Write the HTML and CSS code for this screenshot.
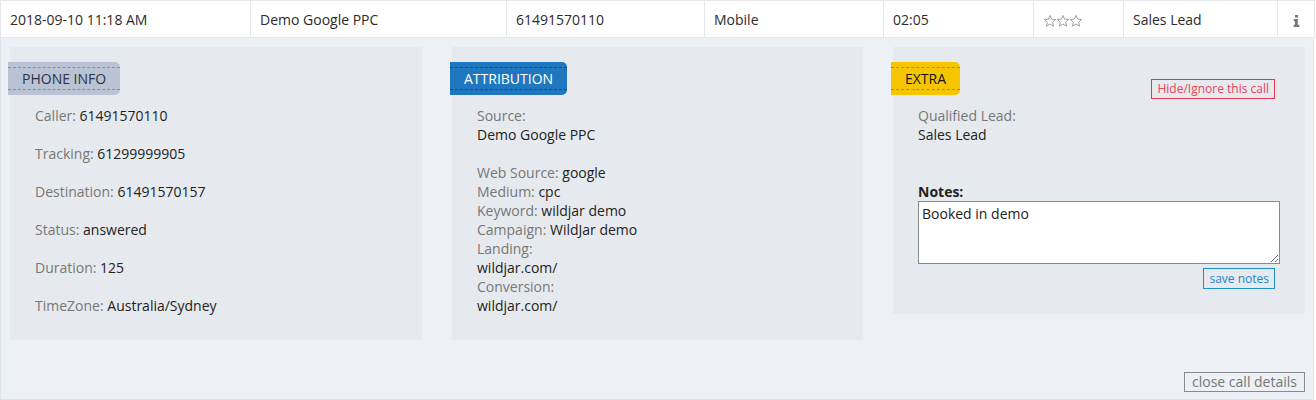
FILE: index.html
```html
<!DOCTYPE html>
<html>
<head>
<meta charset="utf-8">
<link rel="stylesheet" href="styles.css">
</head>
<body>
<div class="wrap">
  <table class="calls">
    <tr>
      <td class="c1">2018-09-10 11:18 AM</td>
      <td class="c2">Demo Google PPC</td>
      <td class="c3">61491570110</td>
      <td class="c4">Mobile</td>
      <td class="c5">02:05</td>
      <td class="c6">
        <span class="stars">
          <svg viewBox="0 0 24 24" width="14" height="14"><path d="M12 2.5l2.8 6.4 6.9.6-5.2 4.6 1.6 6.8L12 17.3l-6.1 3.6 1.6-6.8-5.2-4.6 6.9-.6z" fill="none" stroke="#9a9a9a" stroke-width="1.6" stroke-linejoin="round"/></svg><svg viewBox="0 0 24 24" width="14" height="14"><path d="M12 2.5l2.8 6.4 6.9.6-5.2 4.6 1.6 6.8L12 17.3l-6.1 3.6 1.6-6.8-5.2-4.6 6.9-.6z" fill="none" stroke="#9a9a9a" stroke-width="1.6" stroke-linejoin="round"/></svg><svg viewBox="0 0 24 24" width="14" height="14"><path d="M12 2.5l2.8 6.4 6.9.6-5.2 4.6 1.6 6.8L12 17.3l-6.1 3.6 1.6-6.8-5.2-4.6 6.9-.6z" fill="none" stroke="#9a9a9a" stroke-width="1.6" stroke-linejoin="round"/></svg>
        </span>
      </td>
      <td class="c7">Sales Lead</td>
      <td class="c8">
        <svg class="info" viewBox="0 0 7 12" width="7" height="12"><path d="M2 0h3v2.6H2z M0.8 4h4v5.8H6.3V12H0.7V9.8H2V6.2H0.8z" fill="#777"/></svg>
      </td>
    </tr>
  </table>

  <div class="details">
    <div class="panels">
      <section class="panel">
        <div class="tag-row"><div class="tag tag-phone"><span>PHONE INFO</span></div></div>
        <ul class="info-list">
          <li><span class="lbl">Caller:</span> 61491570110</li>
          <li><span class="lbl">Tracking:</span> 61299999905</li>
          <li><span class="lbl">Destination:</span> 61491570157</li>
          <li><span class="lbl">Status:</span> answered</li>
          <li><span class="lbl">Duration:</span> 125</li>
          <li><span class="lbl">TimeZone:</span> Australia/Sydney</li>
        </ul>
      </section>

      <section class="panel">
        <div class="tag-row"><div class="tag tag-attr"><span>ATTRIBUTION</span></div></div>
        <div class="lines">
          <div class="lbl">Source:</div>
          <div>Demo Google PPC</div>
          <div class="blank"></div>
          <div><span class="lbl">Web Source:</span> google</div>
          <div><span class="lbl">Medium:</span> cpc</div>
          <div><span class="lbl">Keyword:</span> wildjar demo</div>
          <div><span class="lbl">Campaign:</span> WildJar demo</div>
          <div class="lbl">Landing:</div>
          <div>wildjar.com/</div>
          <div class="lbl">Conversion:</div>
          <div>wildjar.com/</div>
        </div>
      </section>

      <section class="panel">
        <div class="tag-row">
          <div class="tag tag-extra"><span>EXTRA</span></div>
          <button class="btn btn-hide">Hide/Ignore this call</button>
        </div>
        <div class="lines">
          <div class="lbl">Qualified Lead:</div>
          <div>Sales Lead</div>
          <div class="blank"></div>
          <div class="blank"></div>
          <div class="notes-lbl">Notes:</div>
        </div>
        <textarea class="notes">Booked in demo</textarea>
        <div class="save-row"><button class="btn btn-save">save notes</button></div>
      </section>
    </div>
    <div class="close-row"><button class="btn btn-close">close call details</button></div>
  </div>
</div>
</body>
</html>
```

FILE: styles.css
```css
* { box-sizing: border-box; }
html, body { margin: 0; padding: 0; background: #ffffff; }
body {
  font-family: "Open Sans", "Liberation Sans", sans-serif;
  font-size: 14px;
  color: #333;
}
.wrap { width: 1314px; }

.calls {
  width: 1314px;
  border-collapse: collapse;
  table-layout: fixed;
  background: #fff;
}
.calls td {
  height: 37px;
  padding: 0 9px;
  border-top: 1px solid #e4e8ec;
  border-bottom: 1px solid #e4e8ec;
  border-left: 1px solid #e4e8ec;
  white-space: nowrap;
  color: #2b2b2b;
  vertical-align: middle;
}
.calls td.c1 { width: 250px; }
.calls td.c2 { width: 256px; }
.calls td.c3 { width: 198px; }
.calls td.c4 { width: 179px; }
.calls td.c5 { width: 150px; }
.calls td.c6 { width: 90px; }
.calls td.c7 { width: 154px; }
.calls td.c8 { width: 37px; text-align: center; border-right: 1px solid #e4e8ec; }
.stars { display: inline-flex; gap: 0; vertical-align: middle; }
.stars svg { display: block; margin-right: -1px; }
.info { display: inline-block; vertical-align: middle; }

.details {
  background: #edf0f4;
  border-left: 1px solid #dfe4ea;
  border-right: 1px solid #dfe4ea;
  border-bottom: 1px solid #dfe4ea;
  padding: 9px 8px 7px 9px;
}
.panels {
  display: grid;
  grid-template-columns: 412px 411px 412px;
  column-gap: 30px;
  align-items: start;
}
.panel {
  background: #e6eaee;
  padding: 15px 25px 25px 25px;
}
.tag-row {
  display: flex;
  justify-content: space-between;
  align-items: flex-start;
  height: 33px;
  margin-left: -27px;
  margin-bottom: 11px;
}
.tag {
  padding: 5px 0;
  border-radius: 0 5px 5px 0;
  line-height: 21px;
}
.tag span {
  display: block;
  padding: 0 14px;
  border-top: 1px dashed rgba(40, 50, 70, 0.35);
  border-bottom: 1px dashed rgba(40, 50, 70, 0.35);
}
.tag-phone { background: #b9c3d3; color: #2c3344; }
.tag-attr { background: #1f78bf; color: #fff; }
.tag-attr span { border-color: rgba(10, 40, 80, 0.55); }
.tag-extra { background: #f5c500; color: #151515; }
.tag-extra span { border-color: rgba(120, 90, 0, 0.5); }

.lbl { color: #777; }
.info-list {
  list-style: none;
  margin: 0;
  padding: 0;
  display: flex;
  flex-direction: column;
  gap: 19px;
  line-height: 19px;
  color: #222;
}
.lines { line-height: 19px; color: #222; }
.blank { height: 19px; }
.notes-lbl { font-weight: 700; color: #222; }

.notes {
  display: block;
  width: 362px;
  height: 63px;
  margin: 0;
  border: 1px solid #8a8a8a;
  padding: 2px 3px;
  font-family: "Open Sans", "Liberation Sans", sans-serif;
  font-size: 14px;
  line-height: 19px;
  color: #222;
  background: #fff;
}
.save-row {
  display: flex;
  justify-content: flex-end;
  width: 357px;
  margin-top: 4px;
}

.btn {
  font-family: "Open Sans", "Liberation Sans", sans-serif;
  background: transparent;
  margin: 0;
  cursor: pointer;
}
.btn-hide {
  margin-top: 17px;
  margin-right: 5px;
  height: 20px;
  padding: 0 5px;
  font-size: 12px;
  line-height: 18px;
  border: 1px solid #e8344c;
  color: #f04058;
}
.btn-save {
  height: 21px;
  padding: 0 5px;
  font-size: 12px;
  line-height: 19px;
  border: 1px solid #1e8fd5;
  color: #1a86d0;
}
.close-row {
  display: flex;
  justify-content: flex-end;
  margin-top: 32px;
}
.btn-close {
  height: 20px;
  padding: 0 7px;
  font-size: 14px;
  line-height: 18px;
  border: 1px solid #8a8a8a;
  color: #777;
}
```
